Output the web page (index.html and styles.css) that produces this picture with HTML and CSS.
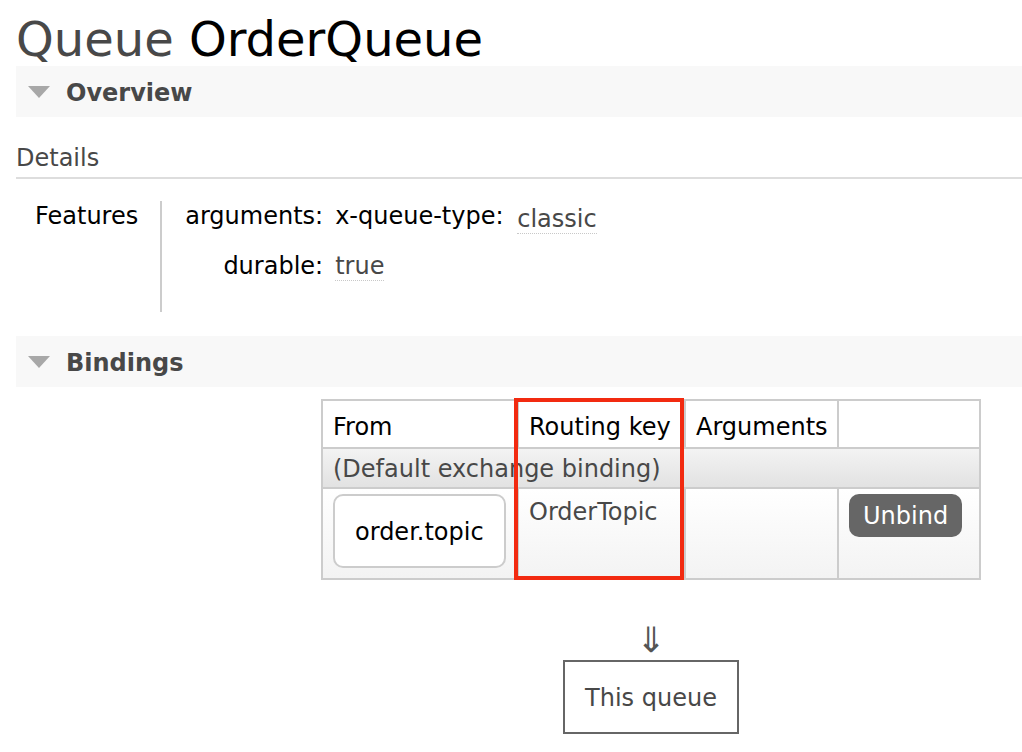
FILE: index.html
```html
<!DOCTYPE html>
<html lang="en">
<head>
<meta charset="utf-8">
<title>Queue OrderQueue</title>
<link rel="stylesheet" href="styles.css">
</head>
<body>
<div class="page">
  <h1 class="title"><span class="kind">Queue</span> OrderQueue</h1>

  <section class="section">
    <h2 class="section-head"><span class="tri"></span>Overview</h2>
    <h3 class="sub">Details</h3>
    <div class="facts">
      <div class="facts-label">Features</div>
      <div class="facts-value">
        <span class="k">arguments:</span>
        <span class="v"><span class="k2">x-queue-type:</span> <abbr class="val val-sub">classic</abbr></span>
        <span class="k">durable:</span>
        <span class="v"><abbr class="val">true</abbr></span>
      </div>
    </div>
  </section>

  <section class="section">
    <h2 class="section-head"><span class="tri"></span>Bindings</h2>
    <div class="bindings">
      <table class="btable">
        <thead>
          <tr>
            <th class="c-from">From</th>
            <th class="c-key">Routing key</th>
            <th class="c-args">Arguments</th>
            <th class="c-act"></th>
          </tr>
        </thead>
        <tbody>
          <tr class="group"><td colspan="4">(Default exchange binding)</td></tr>
          <tr class="brow">
            <td><span class="exchange">order.topic</span></td>
            <td class="rkey">OrderTopic</td>
            <td></td>
            <td><button class="btn" type="button">Unbind</button></td>
          </tr>
        </tbody>
      </table>
      <div class="highlight"></div>
      <div class="arrow">⇓</div>
      <div class="this-queue">This queue</div>
    </div>
  </section>
</div>
</body>
</html>
```
FILE: styles.css
```css
* { box-sizing: border-box; }

html, body {
  margin: 0;
  background: #fff;
}

body {
  font-family: "DejaVu Sans", Verdana, sans-serif;
  font-size: 24px;
  line-height: 28px;
  color: #000;
}

.page {
  padding: 13px 0 0 16px;
}

.title {
  margin: 0;
  font-size: 48px;
  line-height: 53px;
  font-weight: normal;
  color: #000;
}

.title .kind {
  color: #484848;
}

.section-head {
  margin: 0;
  height: 51px;
  display: flex;
  align-items: center;
  gap: 16px;
  padding: 2px 0 0 12px;
  background: #f8f8f8;
  font-size: 24px;
  font-weight: bold;
  color: #484848;
}

.section + .section .section-head {
  margin-top: 24px;
}

.tri {
  width: 0;
  height: 0;
  margin-top: -2px;
  border-left: 11px solid transparent;
  border-right: 11px solid transparent;
  border-top: 12px solid #a8a8a8;
}

.sub {
  margin: 27px 0 0;
  padding-bottom: 5px;
  border-bottom: 2px solid #ddd;
  font-size: 24px;
  line-height: 28px;
  font-weight: normal;
  color: #484848;
}

.facts {
  margin-top: 22px;
  display: flex;
}

.facts-label {
  padding: 1px 22px 0 19px;
  border-right: 2px solid #ccc;
}

.facts-value {
  padding: 1px 0 32px 23px;
  display: grid;
  grid-template-columns: auto auto;
  justify-content: start;
  column-gap: 12px;
  row-gap: 19px;
}

.facts-value .k {
  justify-self: end;
}

.val {
  text-decoration: none;
  color: #484848;
  border-bottom: 1px dotted #c8c8c8;
}

.val-sub {
  margin-left: 6px;
  vertical-align: -3px;
}

.bindings {
  position: relative;
  width: 660px;
  margin: 12px 0 0 305px;
  display: flex;
  flex-direction: column;
  align-items: center;
}

.btable {
  width: 660px;
  table-layout: fixed;
  border-collapse: separate;
  border-spacing: 0;
  border-top: 2px solid #ccc;
  border-left: 2px solid #ccc;
}

.btable th,
.btable td {
  border-right: 2px solid #ccc;
  border-bottom: 2px solid #ccc;
  text-align: left;
  vertical-align: top;
  font-weight: normal;
}

.btable th {
  padding: 12px 10px 6px;
  background: #fff;
}

.c-from { width: 196px; }
.c-key { width: 167px; }
.c-args { width: 153px; }
.c-act { width: 142px; }

.group td {
  padding: 6px 10px 4px;
  color: #484848;
  background: linear-gradient(#f3f3f3, #e2e2e2);
}

.brow td {
  padding: 5px 10px 10px;
  background: linear-gradient(#ffffff, #f3f3f3);
}

.rkey {
  color: #484848;
  padding-top: 9px !important;
}

.exchange {
  display: inline-block;
  vertical-align: top;
  padding: 22px 20px 20px;
  border: 2px solid #ccc;
  border-radius: 10px;
  background: #fff;
  color: #000;
}

.btn {
  display: inline-block;
  vertical-align: top;
  margin: 0;
  padding: 8px 14px 7px;
  border: 0;
  border-radius: 10px;
  background: #666;
  color: #fff;
  font: inherit;
  line-height: 28px;
}

.highlight {
  position: absolute;
  left: 193px;
  top: -1px;
  width: 170px;
  height: 182px;
  border: 4px solid #f22a10;
}

.arrow {
  margin-top: 41px;
  font-size: 35px;
  line-height: 38px;
  color: #555;
}

.this-queue {
  margin-top: 1px;
  padding: 22px 20px 20px;
  border: 2px solid #666;
  color: #484848;
}
```
